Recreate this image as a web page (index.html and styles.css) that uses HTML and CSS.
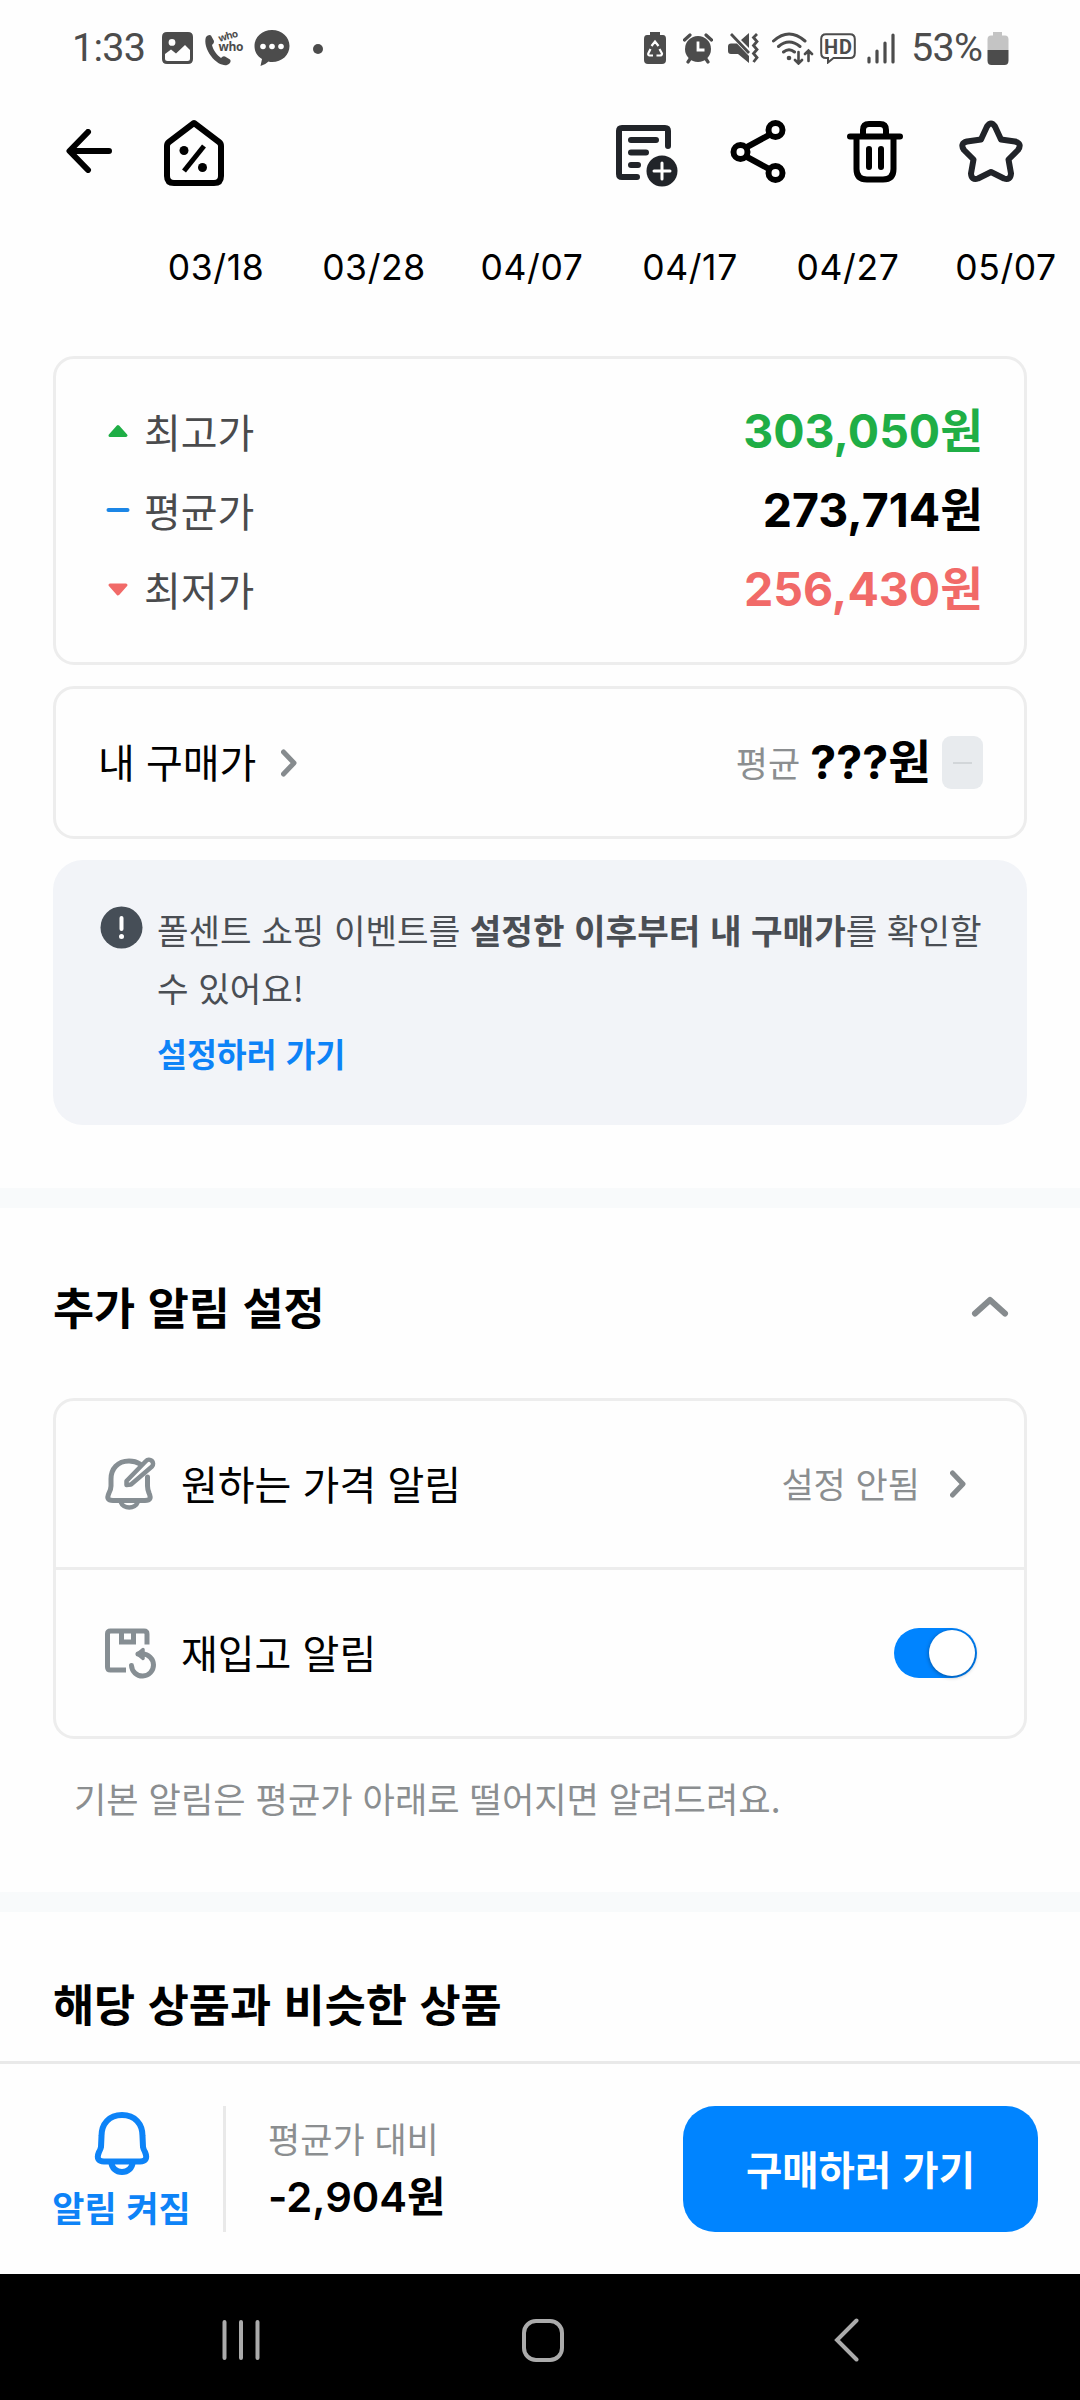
FILE: index.html
```html
<!DOCTYPE html>
<html lang="ko">
<head>
<meta charset="utf-8">
<title>가격 알림</title>
<link rel="stylesheet" href="styles.css">
</head>
<body>
<div class="screen">
  <header class="status">
    <span class="clock">1:33</span>
    <svg class="s-photo" width="31" height="32" viewBox="0 0 31 32"><path fill="#4c4c4c" fill-rule="evenodd" d="M5 0H26Q31 0 31 5V27Q31 32 26 32H5Q0 32 0 27V5Q0 0 5 0ZM10 7A3.400 3.400 0 1 0 10 13.800A3.400 3.400 0 1 0 10 7ZM3 22L9 17.500L14 21.500L23 13L28 18V26.500Q28 29 25.500 29H5.500Q3 29 3 26.500Z"/></svg>
    <svg class="s-phone" width="40" height="44" viewBox="0 -5 40 44" fill="#4c4c4c"><path d="M1 6C2.500 4 5 3.300 6 4.500L9 10Q9.500 12 7 14C8 19 12 24 16 27Q18 24.500 20 25.500L25 28.500C26.500 30 25 33 22 34C18 35 11 32 6 25C1.500 19-1 11 1 6Z"/><text x="14.500" y="11" transform="rotate(-16 14.500 11)" class="who" textLength="20">who</text><text x="13.500" y="19.500" class="who who-big" textLength="25">who</text></svg>
    <svg class="s-chat" width="36" height="36" viewBox="0 0 36 36"><path fill="#4c4c4c" d="M18 0C28 0 35.500 7 35.500 16S28 32 18 32Q16 32 14.500 31.500Q11 35 6.500 36L8 29C3 26 .5 21.500 .5 16C.5 7 8 0 18 0Z"/><g fill="#fff"><circle cx="9" cy="16.500" r="2.800"/><circle cx="18" cy="16.500" r="2.800"/><circle cx="27" cy="16.500" r="2.800"/></g></svg>
    <i class="s-dot"></i>
    <span class="grow"></span>
    <svg class="s-eco" width="22" height="32" viewBox="0 0 22 32"><path fill="#4c4c4c" d="M6 0H16V3H19Q22 3 22 7V28Q22 32 18 32H4Q0 32 0 28V7Q0 3 3 3H6Z"/><path fill="none" stroke="#fff" stroke-width="2.200" d="M7.500 14L11 9.500L14.500 14M15.500 17L18 21.500Q18 23.500 16 23.500H12.500M9 23.500H5.500Q3.500 23 4.500 21L6.500 17"/></svg>
    <svg class="s-alarm" width="30" height="31" viewBox="0 0 30 31"><circle cx="15" cy="16" r="13" fill="#4c4c4c"/><path d="M1.500 7L7 2M28.500 7L23 2M5 29L7 26M25 29L23 26" stroke="#4c4c4c" stroke-width="3.200" stroke-linecap="round"/><path d="M15 8.500V17H21.500" stroke="#fff" stroke-width="2.800" fill="none"/></svg>
    <svg class="s-mute" width="31" height="31" viewBox="0 0 31 31"><path fill="#4c4c4c" d="M3 10.500H9L21 23V30L10 21H3Q0 21 0 18V13.500Q0 10.500 3 10.500ZM13 7L21 0V15Z"/><path d="M3 1L21 20" stroke="#4c4c4c" stroke-width="2.800"/><path d="M29 1L25.500 4.500L29 8.500L25.500 12.500L29 16.500L25.500 20.500L29 24.500L25.500 29" stroke="#4c4c4c" stroke-width="2.800" fill="none"/></svg>
    <svg class="s-wifi" width="42" height="33" viewBox="0 0 42 33" fill="none" stroke="#4c4c4c" stroke-width="3" stroke-linecap="round"><path d="M1.500 9Q17 -5 33 9M6.500 14.500Q17 5.500 28 14.500M11.500 20Q17 15.500 22.500 20"/><circle cx="17" cy="26" r="2.300" fill="#4c4c4c" stroke="none"/><path d="M26.500 20V31M23 28L26.500 31.500L30 28M36.500 29V18.500M33 22L36.500 18.500L40 22" stroke-width="2.600"/></svg>
    <svg class="s-hd" width="36" height="31" viewBox="0 0 36 31"><path d="M6 1.200H30Q34.800 1.200 34.800 6V20Q34.800 25 30 25H13.500L8 29.500V25H6Q1.200 25 1.200 20V6Q1.200 1.200 6 1.200Z" fill="none" stroke="#4c4c4c" stroke-width="2"/><text x="4" y="20.500" class="hd" textLength="28">HD</text></svg>
    <svg class="s-signal" width="28" height="31" viewBox="0 0 28 31" stroke="#4c4c4c" stroke-width="3.200" stroke-linecap="round"><path d="M2 25V29M10 18V29M18 10V29M26 2V29"/></svg>
    <span class="pct">53%</span>
    <svg class="s-batt" width="22" height="33" viewBox="0 0 22 33"><path fill="#c4c4c4" d="M6 0H15V3.500H18Q21.500 3.500 21.500 7.500V18H.5V7.500Q.5 3.500 4 3.500H6Z"/><path fill="#4c4c4c" d="M.5 18H21.500V28.500Q21.500 33 17.500 33H4.500Q.5 33 .5 28.500Z"/></svg>
  </header>

  <nav class="appbar">
    <svg class="a-back" width="46" height="44" viewBox="0 0 46 44" fill="none" stroke="#000" stroke-width="6" stroke-linecap="round" stroke-linejoin="round"><path d="M22 3L3.500 22L22 41M4 22H43"/></svg>
    <svg class="a-home" width="62" height="68" viewBox="0 0 62 68" fill="none" stroke="#000" stroke-width="6" stroke-linejoin="round"><path d="M31 4L56 23Q58 24.500 58 27V57Q58 64 51 64H11Q4 64 4 57V27Q4 24.500 6 23Z"/><path d="M21 52L41 27" stroke-width="5"/><circle cx="21" cy="31.500" r="4.500" fill="#000" stroke="none"/><circle cx="39.500" cy="48.500" r="4.500" fill="#000" stroke="none"/></svg>
    <span class="grow"></span>
    <svg class="a-note" width="63" height="63" viewBox="0 0 63 63" fill="none" stroke="#212429" stroke-width="6" stroke-linecap="round" stroke-linejoin="round"><path d="M53 22V7Q53 4 50 4H7Q4 4 4 7V50Q4 53 7 53H22M16 16H41M16 28.500H31M16 41H23"/><circle cx="47" cy="47" r="15.500" fill="#212429" stroke="none"/><path d="M47 39V55M39 47H55" stroke="#fff" stroke-width="3"/></svg>
    <svg class="a-share" width="56" height="65" viewBox="0 0 56 65" fill="none" stroke="#000" stroke-width="6"><path d="M17 28L39 16M17 38L39 50"/><circle cx="45.500" cy="11" r="7"/><circle cx="10.500" cy="33" r="7"/><circle cx="45.500" cy="54" r="7"/></svg>
    <svg class="a-trash" width="56" height="62" viewBox="0 0 56 62" fill="none" stroke="#000" stroke-width="6" stroke-linecap="round"><path d="M3 15.500H53M16 14V9Q16 3 22 3H33Q39 3 39 9V14M9.500 17V48Q9.500 58.500 20 58.500H36Q46.500 58.500 46.500 48V17M22 28V46M34 28V46"/></svg>
    <svg class="a-star" width="64" height="63" viewBox="0 0 64 63" fill="none" stroke="#212429" stroke-width="6" stroke-linejoin="round"><path d="M28 6.500Q32 .5 36 6.500L42 19.500L56 21.500Q63.500 23.500 59 30L49.500 39.500L52 53.500Q51.500 60.500 45 58.500L32 52L19 58.500Q12.500 60.500 12 53.500L14.500 39.500L5 30Q.5 23.500 8 21.500L22 19.500Z"/></svg>
  </nav>

  <div class="dates"><span>03/18</span><span>03/28</span><span>04/07</span><span>04/17</span><span>04/27</span><span>05/07</span></div>

  <main class="content">
    <section class="card prices">
      <div class="price-row"><svg width="24" height="16" viewBox="0 0 24 16"><path d="M12 3.500L20 12.500H4Z" fill="#1fae46" stroke="#1fae46" stroke-width="3" stroke-linejoin="round"/></svg><span class="label">최고가</span><b class="high">303,050원</b></div>
      <div class="price-row"><svg width="24" height="16" viewBox="0 0 24 16"><path d="M2.500 8H21.500" stroke="#1c86e6" stroke-width="4" stroke-linecap="round"/></svg><span class="label">평균가</span><b>273,714원</b></div>
      <div class="price-row"><svg width="24" height="16" viewBox="0 0 24 16"><path d="M12 13L20 4H4Z" fill="#f16a68" stroke="#f16a68" stroke-width="3" stroke-linejoin="round"/></svg><span class="label">최저가</span><b class="low">256,430원</b></div>
    </section>

    <section class="card mine">
      <span class="mine-title">내 구매가</span>
      <svg class="chev" width="16" height="28" viewBox="0 0 16 28"><path d="M2.500 3L13 14L2.500 25"/></svg>
      <span class="grow"></span>
      <span class="avg">평균</span>
      <b class="unknown">???원</b>
      <span class="pill"></span>
    </section>

    <section class="notice">
      <svg class="info" width="43" height="43" viewBox="0 0 43 43"><circle cx="21.500" cy="21.500" r="21" fill="#464e57"/><path d="M21.500 12V23" stroke="#fff" stroke-width="4" stroke-linecap="round"/><circle cx="21.500" cy="30.500" r="2.500" fill="#fff"/></svg>
      <div class="notice-body">
        <p>폴센트 쇼핑 이벤트를 <b>설정한 이후부터 내 구매가</b>를 확인할<br>수 있어요!</p>
        <a class="link">설정하러 가기</a>
      </div>
    </section>
  </main>

  <hr class="band">

  <section class="alerts">
    <div class="alerts-head">
      <h2>추가 알림 설정</h2>
      <svg width="38" height="24" viewBox="0 0 38 24"><path d="M4 18.500L19 5L34 18.500" fill="none" stroke="#868b8e" stroke-width="6" stroke-linecap="round" stroke-linejoin="round"/></svg>
    </div>
    <div class="card options">
      <div class="option">
        <svg class="opt-icon" width="54" height="54" viewBox="0 0 54 54" fill="none" stroke="#868e93" stroke-width="5" stroke-linejoin="round" stroke-linecap="round"><path d="M36 7Q31.500 4 25 4C13.500 4 7 12 7 22V29Q7 32 5 36C2.500 41.500 4 43.500 9 43.500H41C46 43.500 47.500 41.500 45 36Q43.500 32 43.500 29V20"/><path d="M22.500 28V24L42 4A4 4 0 0 1 48 9.500L27 27.500Z" stroke-width="4.500"/><path d="M17 45.500A8.500 6.500 0 0 0 33.500 45.500" stroke-width="4.500"/></svg>
        <span class="opt-name">원하는 가격 알림</span>
        <span class="grow"></span>
        <span class="opt-state">설정 안됨</span>
        <svg class="chev opt-chev" width="16" height="28" viewBox="0 0 16 28"><path d="M2.500 3L13 14L2.500 25"/></svg>
      </div>
      <div class="option">
        <svg class="opt-icon" width="54" height="54" viewBox="0 0 54 54" fill="none" stroke="#868e93" stroke-width="5"><path d="M43 18.500V8Q43 5 40 5H6.500Q3.500 5 3.500 8V41Q3.500 44 6.500 44H22M17.500 5.500V16H29.500V5.500"/><path d="M27.500 39.500A11 11 0 1 0 38.500 28H34" stroke-linecap="round"/><path d="M39 23.500L33.500 28L39 32.500Z" fill="#868e93" stroke-width="3.500" stroke-linejoin="round"/></svg>
        <span class="opt-name">재입고 알림</span>
        <span class="grow"></span>
        <span class="toggle"><i></i></span>
      </div>
    </div>
    <p class="foot">기본 알림은 평균가 아래로 떨어지면 알려드려요.</p>
  </section>

  <hr class="band">

  <section class="similar"><h2>해당 상품과 비슷한 상품</h2></section>

  <footer class="buybar">
    <div class="bell">
      <svg width="56" height="64" viewBox="0 0 56 64" fill="none" stroke="#0d83f7" stroke-width="6" stroke-linejoin="round"><path d="M28 4C15 4 7.500 13 7.500 25L7 36Q6.500 38.500 5 41C2 48 5 50.500 10 50.500H46C51 50.500 54 48 51 41Q49.500 38.500 49 36L48.500 25C48.500 13 41 4 28 4Z"/><path d="M17.500 51.500A10.500 9.500 0 0 0 38.500 51.500"/></svg>
      <span>알림 켜짐</span>
    </div>
    <i class="vline"></i>
    <div class="diff"><span>평균가 대비</span><b>-2,904원</b></div>
    <span class="grow"></span>
    <button class="buy">구매하러 가기</button>
  </footer>

  <div class="navbar">
    <svg class="n-recent" width="38" height="42" viewBox="0 0 38 42" stroke="#ababab" stroke-width="4" stroke-linecap="round"><path d="M2.500 3V39M19 3V39M35.500 3V39"/></svg>
    <svg class="n-home" width="42" height="43" viewBox="0 0 42 43"><rect x="2" y="2" width="38" height="39" rx="12" fill="none" stroke="#ababab" stroke-width="4"/></svg>
    <svg class="n-back" width="25" height="44" viewBox="0 0 25 44" fill="none" stroke="#ababab" stroke-width="4" stroke-linecap="round"><path d="M22.500 2.500L3 22L22.500 41.500"/></svg>
  </div>
</div>
</body>
</html>
```
FILE: styles.css
```css
* { box-sizing: border-box; }
body { margin: 0; background: #fff; }
p, h2, hr { margin: 0; }
svg { display: block; flex: none; }
.screen {
  width: 1080px; height: 2400px; overflow: hidden;
  display: flex; flex-direction: column;
  background: #fefefe; color: #000;
  font-family: "Noto Sans CJK KR", sans-serif;
}
.grow { flex: 1; }

/* system status bar */
.status { height: 96px; display: flex; align-items: center; padding: 0 71px 0 72px; color: #4c4c4c; flex: none; }
.clock, .pct { font: 400 39.500px/60px Roboto, sans-serif; letter-spacing: -0.700px; white-space: nowrap; }
.clock { width: 90px; }
.s-phone { margin-left: 12px; overflow: visible; }
.s-chat { margin-left: 9px; }
.s-dot { width: 10px; height: 10px; border-radius: 50%; background: #4c4c4c; margin: 1px 0 0 23px; }
.who { font: 700 10px "Open Sans", sans-serif; }
.who-big { font-size: 12px; }
.hd { font: 700 20px Roboto, sans-serif; fill: #4c4c4c; }
.s-alarm { margin-left: 17px; }
.s-mute { margin-left: 15px; }
.s-wifi { margin-left: 13px; }
.s-hd { margin-left: 6px; }
.s-signal { margin-left: 11px; }
.pct { margin-left: 16px; width: 76px; }

/* app bar */
.appbar { height: 110px; display: flex; align-items: center; padding: 0 57px 0 66px; flex: none; }
.a-home { margin: 3px 0 0 51px; }
.a-note { margin-top: 8px; }
.a-share { margin-left: 52px; }
.a-trash { margin: 2px 0 0 61px; }
.a-star { margin: 1px 0 0 56px; }

/* chart axis */
.dates { height: 150px; display: flex; padding: 32px 0 0 137px; flex: none; }
.dates span { flex: 0 0 158px; text-align: center; font: 400 35.500px/60px Inter, sans-serif; letter-spacing: 0.600px; }

.card { border: 3px solid #ededed; border-radius: 21px; background: #fefefe; }
.content { display: flex; flex-direction: column; gap: 21px; padding: 0 53px; height: 832px; flex: none; }
.prices { height: 309px; padding: 33px 41px 0 50px; }
.price-row { display: flex; align-items: center; height: 78.700px; }
.label { margin-left: 14px; font-size: 40px; line-height: 60px; color: #4a4b4d; flex: 1; }
.price-row b, .unknown { font: 700 46.500px/60px Inter, "Noto Sans CJK KR", sans-serif; }
.high { color: #1fae46; }
.low { color: #f16a68; }

.mine { height: 153px; display: flex; align-items: center; padding: 0 41px 0 42px; }
.mine-title { font-size: 40px; margin-top: -3px; }
.chev path { fill: none; stroke: #868b8e; stroke-width: 5; stroke-linecap: round; stroke-linejoin: round; }
.mine .chev { margin-left: 25px; }
.avg { font-size: 35px; color: #8b8e90; margin: -3px 10px 0 0; }
.unknown { margin-top: -2px; }
.pill { width: 41px; height: 53px; border-radius: 9px; background: #e8ebee; margin-left: 11px; display: flex; align-items: center; justify-content: center; }
.pill::before { content: ""; width: 19px; height: 2px; background: #d2d6d9; }

.notice { height: 265px; border-radius: 30px; background: #f2f4f8; display: flex; padding: 42px 0 0 47px; color: #4a4e54; }
.info { margin-top: 4px; }
.notice-body { margin: -2px 0 0 14px; font-size: 34.300px; line-height: 58px; white-space: nowrap; }
.link { display: block; font-size: 32.500px; font-weight: 700; color: #0d83f7; line-height: 58px; margin-top: 8px; }

.band { border: 0; height: 20px; background: #f8fafb; flex: none; }

.alerts { height: 684px; padding: 0 53px; flex: none; }
.alerts-head { height: 190px; display: flex; align-items: center; justify-content: space-between; padding: 8px 18px 0 0; }
h2 { font-size: 44.700px; line-height: 66px; font-weight: 700; margin-top: -3px; }
.options { height: 341px; }
.option { height: 166px; display: flex; align-items: center; padding: 0 47px 0 48px; }
.option + .option { height: 169px; border-top: 3px solid #ededed; }
.opt-name { font-size: 40px; margin: -3px 0 0 23px; }
.opt-state { font-size: 35px; color: #8b8e90; margin-top: -3px; }
.opt-chev { margin: 0 11px 0 30px; }
.toggle { width: 83px; height: 50px; border-radius: 25px; background: #0084ff; display: flex; justify-content: flex-end; padding: 2px 2px; }
.toggle i { width: 46px; height: 46px; border-radius: 50%; background: #fff; box-shadow: 0 1px 4px rgba(0,0,0,.4); }
.foot { font-size: 35.200px; line-height: 52px; color: #8b8e90; padding: 33px 0 0 21px; }

.similar { height: 149px; padding: 61px 53px 0; flex: none; }

/* purchase bar */
.buybar { height: 213px; border-top: 3px solid #e9e9e9; display: flex; padding: 42px 42px 0 53px; flex: none; }
.bell { width: 137px; display: flex; flex-direction: column; align-items: center; padding-top: 5px; }
.bell span { font-size: 35px; line-height: 52px; font-weight: 700; color: #0d83f7; white-space: nowrap; margin-top: 6px; }
.vline { width: 3px; height: 126px; background: #e9e9e9; margin-left: 33px; }
.diff { display: flex; flex-direction: column; margin-left: 42px; padding-top: 6px; }
.diff span { font-size: 35px; line-height: 52px; color: #8b8e90; }
.diff b { font: 600 41.700px/60px Inter, "Noto Sans CJK KR", sans-serif; margin-top: 3px; }
.buy { width: 355px; height: 126px; border: 0; border-radius: 32px; background: #0084ff; color: #fff; font: 700 39.500px "Noto Sans CJK KR", sans-serif; padding: 0 0 3px; }

/* system navigation */
.navbar { height: 126px; background: #000; display: flex; align-items: center; padding: 6px 0 0 222px; flex: none; }
.n-home { margin-left: 262px; }
.n-back { margin-left: 270px; }
```
